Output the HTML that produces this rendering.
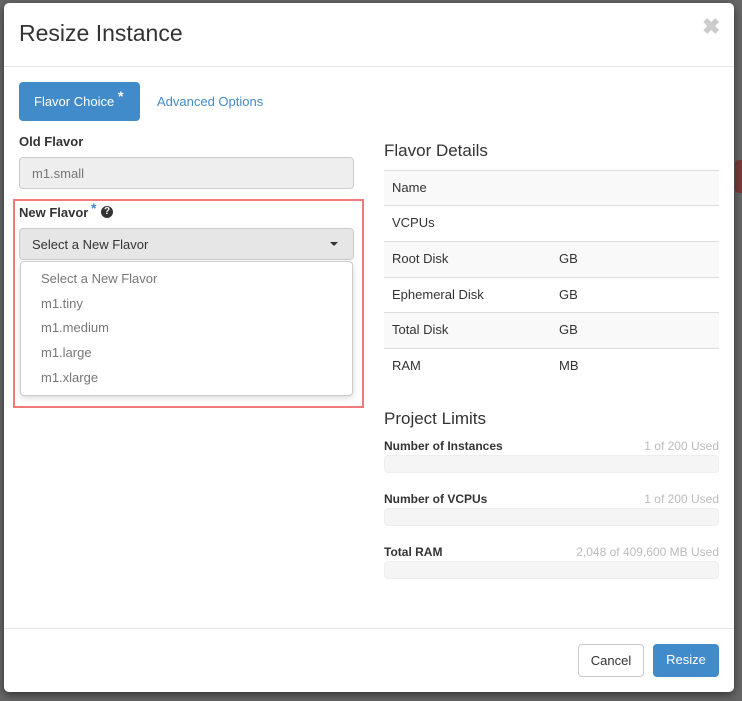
<!DOCTYPE html>
<html><head><style>
body{margin:0;width:742px;height:701px;background:#666;font-family:"Liberation Sans",sans-serif;position:relative;overflow:hidden;color:#333}
.a{position:absolute}
.modal{left:4px;top:3px;width:730px;height:689px;background:#fff;border-radius:5px;box-shadow:0 3px 9px rgba(0,0,0,.5)}
.t{font-size:13px}
.row{position:absolute;left:380px;width:335px;height:35px;border-top:1px solid #ddd;font-size:13px}
.row span{position:absolute;top:9px;left:8px}
.row b{position:absolute;top:9px;left:175px;font-weight:normal}
.bar{position:absolute;left:380px;width:333px;height:16px;background:#f5f5f5;border:1px solid #eee;border-radius:4px}
.lbl{position:absolute;left:380px;font-size:12px;font-weight:bold}
.used{position:absolute;right:15px;font-size:12px;color:#bbb}
.opt{position:absolute;left:20px;font-size:13px;color:#777}
</style></head><body>
<div class="a" style="left:735px;top:160px;width:7px;height:33px;background:#7a3a3a;border-radius:4px 0 0 4px"></div>
<div class="a modal">
 <div class="a" style="left:15px;top:17px;font-size:23px;color:#333">Resize Instance</div>
 <div class="a" style="left:698px;top:11px;font-size:22px;color:#ccc;font-weight:bold">✖</div>
 <div class="a" style="left:0;top:63px;width:730px;height:1px;background:#e5e5e5"></div>
 <div class="a" style="left:15px;top:79px;width:121px;height:39px;background:#428bca;border-radius:4px;color:#fff;font-size:13px"><span class="a" style="left:15px;top:12px">Flavor Choice</span><span class="a" style="left:99px;top:6px;font-size:14px;font-weight:bold">*</span></div>
 <div class="a t" style="left:153px;top:91px;color:#428bca">Advanced Options</div>
 <div class="a t" style="left:15px;top:131px;font-weight:bold">Old Flavor</div>
 <div class="a" style="left:15px;top:154px;width:333px;height:30px;background:#eee;border:1px solid #ccc;border-radius:4px"><span class="a t" style="left:12px;top:8px;color:#777">m1.small</span></div>
 <div class="a" style="left:9px;top:196px;width:347px;height:205px;border:2px solid #f27a7a"></div>
 <div class="a t" style="left:15px;top:202px;font-weight:bold">New Flavor</div>
 <div class="a" style="left:87px;top:197px;font-size:14px;font-weight:bold;color:#428bca">*</div>
 <div class="a" style="left:97px;top:203px;width:12px;height:12px;border-radius:50%;background:#333;color:#fff;font-size:10px;font-weight:bold;text-align:center;line-height:12px">?</div>
 <div class="a" style="left:15px;top:225px;width:333px;height:30px;background:#e6e6e6;border:1px solid #ccc;border-radius:4px"><span class="a t" style="left:12px;top:8px">Select a New Flavor</span><span class="a" style="left:310px;top:13px;border-left:4px solid transparent;border-right:4px solid transparent;border-top:4px solid #333"></span></div>
 <div class="a" style="left:16px;top:258px;width:331px;height:133px;background:#fff;border:1px solid #ccc;border-radius:4px;box-shadow:0 2px 6px rgba(0,0,0,.15)">
  <div class="opt" style="top:9px">Select a New Flavor</div>
  <div class="opt" style="top:34px">m1.tiny</div>
  <div class="opt" style="top:58px">m1.medium</div>
  <div class="opt" style="top:83px">m1.large</div>
  <div class="opt" style="top:108px">m1.xlarge</div>
 </div>
 <div class="a" style="left:380px;top:138px;font-size:17px">Flavor Details</div>
 <div class="row" style="top:167px;background:#f9f9f9"><span>Name</span></div>
 <div class="row" style="top:202px"><span>VCPUs</span></div>
 <div class="row" style="top:238px;background:#f9f9f9"><span>Root Disk</span><b>GB</b></div>
 <div class="row" style="top:274px"><span>Ephemeral Disk</span><b>GB</b></div>
 <div class="row" style="top:309px;background:#f9f9f9"><span>Total Disk</span><b>GB</b></div>
 <div class="row" style="top:345px"><span>RAM</span><b>MB</b></div>
 <div class="a" style="left:380px;top:406px;font-size:17px">Project Limits</div>
 <div class="lbl" style="top:436px">Number of Instances</div><div class="used" style="top:436px">1 of 200 Used</div>
 <div class="bar" style="top:452px"></div>
 <div class="lbl" style="top:489px">Number of VCPUs</div><div class="used" style="top:489px">1 of 200 Used</div>
 <div class="bar" style="top:505px"></div>
 <div class="lbl" style="top:542px">Total RAM</div><div class="used" style="top:542px">2,048 of 409,600 MB Used</div>
 <div class="bar" style="top:558px"></div>
 <div class="a" style="left:0;top:625px;width:730px;height:1px;background:#e5e5e5"></div>
 <div class="a t" style="left:574px;top:641px;width:64px;height:31px;border:1px solid #ccc;border-radius:4px;text-align:center;line-height:31px">Cancel</div>
 <div class="a t" style="left:649px;top:641px;width:66px;height:33px;background:#428bca;border-radius:4px;color:#fff;text-align:center;line-height:31px">Resize</div>
</div>
</body></html>
